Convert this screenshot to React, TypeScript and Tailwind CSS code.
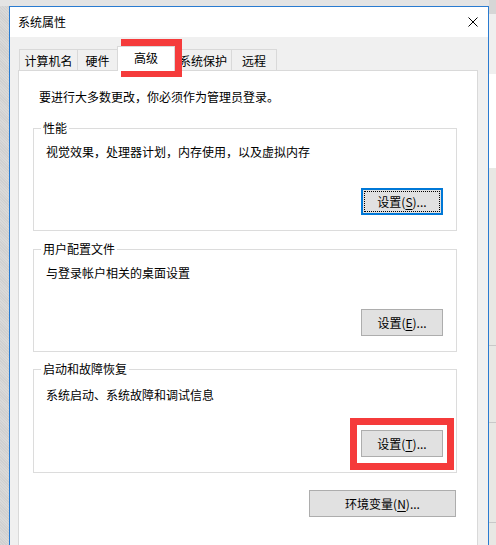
import React from 'react';

const font = "font-['Microsoft_YaHei','Noto_Sans_CJK_SC',sans-serif]";

const Mn = ({ k }: { k: string }) => <span className="underline underline-offset-2">{k}</span>;

const SettingsButton = ({ k, focused }: { k: string; focused?: boolean }) => {
  if (focused) {
    return (
      <button className="h-[27px] w-[82px] border-2 border-[#0078d7] bg-[#e1e1e1] p-[1px]">
        <div className="flex h-full items-center justify-center border border-dotted border-black leading-[16px]">
          设置(<Mn k={k} />)...
        </div>
      </button>
    );
  }
  return (
    <button className="flex h-[27px] w-[82px] items-center justify-center border border-[#adadad] bg-[#e1e1e1] leading-[16px]">
      设置(<Mn k={k} />)...
    </button>
  );
};

const Group = ({
  title,
  text,
  k,
  focused,
  top,
  textTop,
  btnGap,
}: {
  title: string;
  text: string;
  k: string;
  focused?: boolean;
  top: string;
  textTop: string;
  btnGap: string;
}) => (
  <div className={`relative ml-[14px] w-[424px] border border-[#dcdcdc] pb-[15px] pl-[12px] pr-[13px] ${top} ${textTop}`}>
    <span className="absolute -top-[9px] left-[7px] bg-white px-[2px] leading-[16px]">{title}</span>
    <p className="leading-[16px]">{text}</p>
    <div className={`flex justify-end ${btnGap}`}>
      <SettingsButton k={k} focused={focused} />
    </div>
  </div>
);

const tabs = [
  { name: '计算机名', w: 'w-[59px]' },
  { name: '硬件', w: 'w-[41px]' },
  { name: '高级', w: 'w-[58px]', active: true },
  { name: '系统保护', w: 'w-[58px]' },
  { name: '远程', w: 'w-[46px]' },
];

export default function App() {
  return (
    <div className={`relative flex h-[545px] w-[496px] overflow-hidden bg-[#e4e4e4] text-[12px] text-black ${font}`}>
      {/* desktop behind, left */}
      <div className="mt-[6px] w-[9px] shrink-0 bg-[repeating-linear-gradient(45deg,#d0d0d0_0px,#d0d0d0_1px,#d9d9d9_1px,#d9d9d9_2px)]" />

      {/* dialog window */}
      <div className="mt-[6px] flex h-[600px] w-[480px] shrink-0 flex-col border-x border-t border-[#2a7bd0] bg-[#f0f0f0]">
        <div className="flex h-[30px] items-center justify-between bg-white pl-[8px] pr-[10px]">
          <span className="leading-[16px]">系统属性</span>
          <svg width="10" height="10" viewBox="0 0 10 10" className="text-black">
            <path d="M0.5 0.5 L9.5 9.5 M9.5 0.5 L0.5 9.5" stroke="currentColor" strokeWidth="1" />
          </svg>
        </div>

        <div className="flex flex-1 flex-col pl-[8px] pr-[10px] pt-[9px]">
          <div className="flex h-[25px] items-end pl-[1px]">
            {tabs.map((t, i) =>
              t.active ? (
                <div
                  key={t.name}
                  className={`relative z-10 -ml-[1px] flex h-[25px] ${t.w} items-start justify-center border-x border-t border-[#d9d9d9] bg-white pt-[3px] leading-[16px]`}
                >
                  {t.name}
                </div>
              ) : (
                <div
                  key={t.name}
                  className={`${i === 0 ? '' : '-ml-[1px]'} flex h-[22px] ${t.w} items-center justify-center border-x border-t border-[#d9d9d9] bg-[#f0f0f0] leading-[16px]`}
                >
                  {t.name}
                </div>
              )
            )}
          </div>

          <div className="-mt-[1px] flex-1 border border-[#d9d9d9] bg-white pt-[18px]">
            <p className="pl-[20px] leading-[16px]">要进行大多数更改，你必须作为管理员登录。</p>

            <Group
              title="性能"
              text="视觉效果，处理器计划，内存使用，以及虚拟内存"
              k="S"
              focused
              top="mt-[23px]"
              textTop="pt-[15px]"
              btnGap="mt-[28px]"
            />
            <Group
              title="用户配置文件"
              text="与登录帐户相关的桌面设置"
              k="E"
              top="mt-[18px]"
              textTop="pt-[15px]"
              btnGap="mt-[28px]"
            />
            <Group
              title="启动和故障恢复"
              text="系统启动、系统故障和调试信息"
              k="T"
              top="mt-[17px]"
              textTop="pt-[17px]"
              btnGap="mt-[27px]"
            />

            <div className="ml-[14px] mt-[17px] flex w-[424px] justify-end pr-[1px]">
              <button className="flex h-[27px] w-[147px] items-center justify-center border border-[#adadad] bg-[#e1e1e1] leading-[16px]">
                环境变量(<Mn k="N" />)...
              </button>
            </div>
          </div>
        </div>
      </div>

      {/* desktop behind, right */}
      <div className="flex w-[7px] shrink-0 flex-col">
        <div className="h-[14px] bg-[#d6d6d6]" />
        <div className="h-[60px] bg-[#efefef]" />
        <div className="h-[94px] bg-white" />
        <div className="h-[177px] bg-[#e8e8e4]" />
        <div className="h-[77px] border-t border-[#c8c8c8] bg-[#e8e8e4]" />
        <div className="h-[100px] border-t border-[#c8c8c8] bg-[#e8e8e4]" />
        <div className="flex-1 border-t border-[#c8c8c8] bg-[#e8e8e4]" />
      </div>

      {/* red annotation frames */}
      <div className="pointer-events-none absolute left-[121px] top-[39px] h-[38px] w-[61px] border-[7px] border-[#f53b3b]" />
      <div className="pointer-events-none absolute left-[350px] top-[418px] h-[52px] w-[104px] border-[7px] border-[#f53b3b]" />
    </div>
  );
}
